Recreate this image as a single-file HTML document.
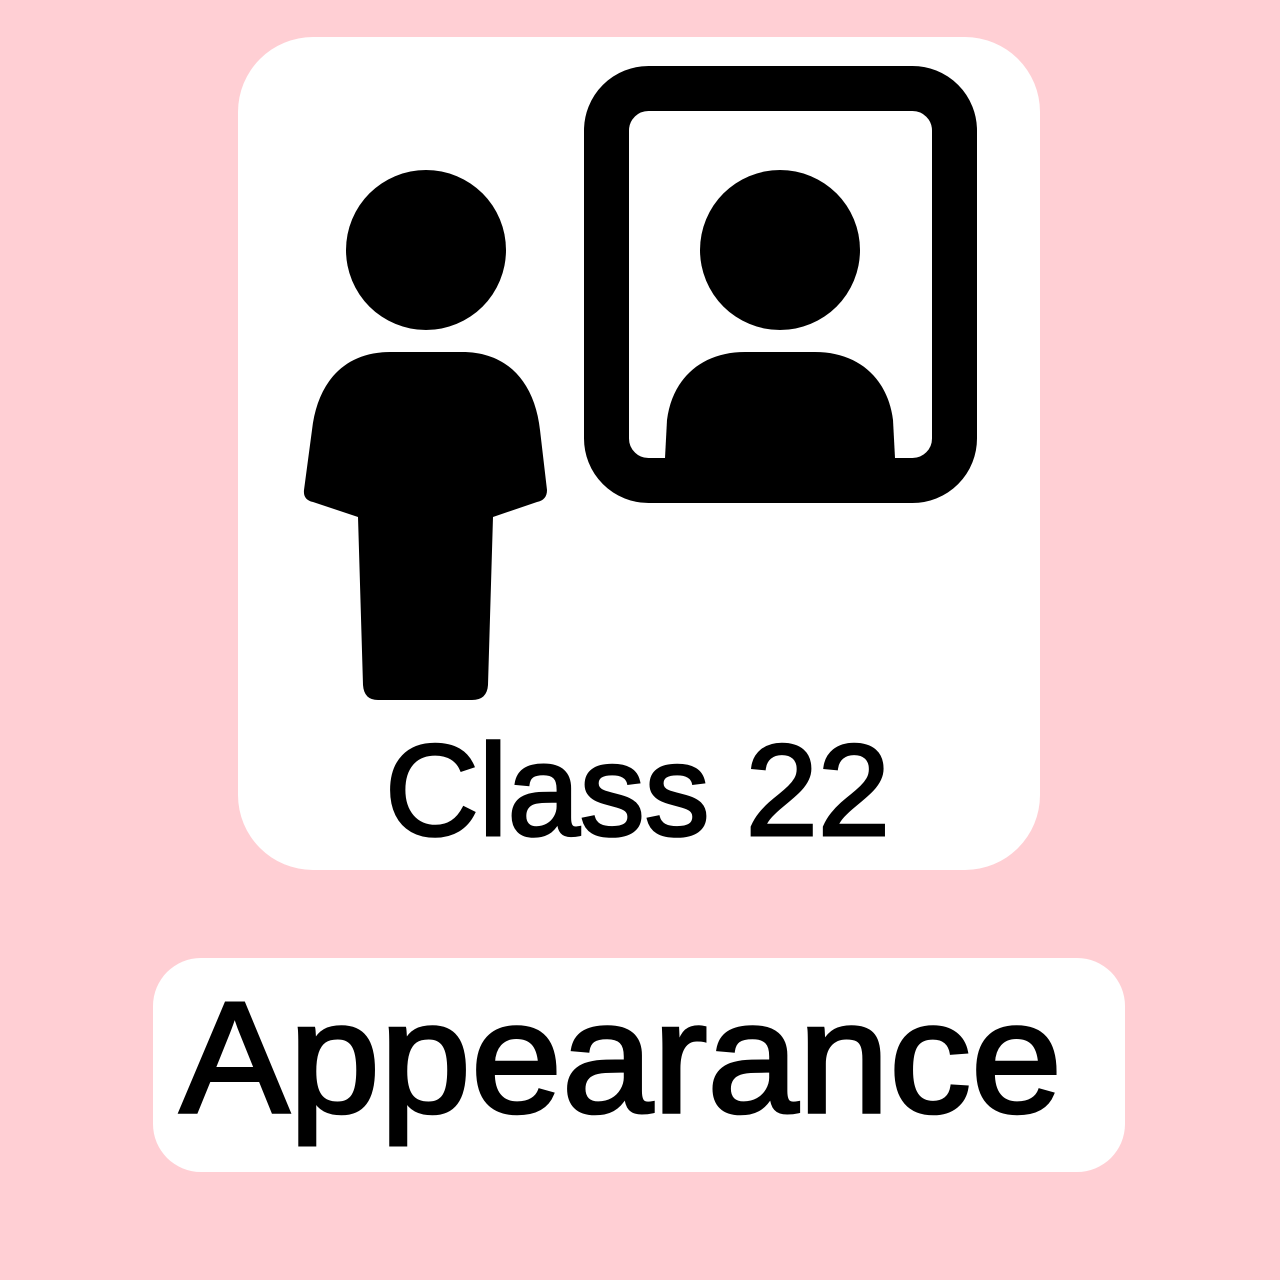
<!DOCTYPE html>
<html><head><meta charset="utf-8"><style>
html,body{margin:0;padding:0;background:#ffcfd4;width:1280px;height:1280px;overflow:hidden}
svg{display:block}
</style></head><body>
<svg width="1280" height="1280" viewBox="0 0 1280 1280" xmlns="http://www.w3.org/2000/svg">
<rect width="1280" height="1280" fill="#ffcfd4"/>
<rect x="238" y="37" width="802" height="833" rx="75" fill="#fff"/>
<rect x="153" y="958" width="972" height="214" rx="48" fill="#fff"/>
<circle cx="426" cy="250" r="80" fill="#000"/>
<path d="M390 352 H462 C510 352 535 385 540 430 L547 490 Q547 500 537 502 L493 517 L488 685 Q487 700 472 700 H378 Q364 700 363 685 L358 517 L313 502 Q303 500 304 490 L312 430 C317 385 342 352 390 352 Z" fill="#000"/>
<rect x="606.5" y="88.5" width="348" height="392" rx="42" fill="none" stroke="#000" stroke-width="45"/>
<circle cx="780" cy="250" r="80" fill="#000"/>
<path d="M665 458 L667 420 C672 380 700 352 745 352 H815 C860 352 888 380 893 420 L895 458 Z" fill="#000"/>
<text x="385" y="835" font-family="Liberation Sans, sans-serif" font-size="130" fill="#000" stroke="#000" stroke-width="3" textLength="505" lengthAdjust="spacingAndGlyphs">Class 22</text>
<text x="180" y="1112" font-family="Liberation Sans, sans-serif" font-size="158" fill="#000" stroke="#000" stroke-width="3.5" textLength="882" lengthAdjust="spacingAndGlyphs">Appearance</text>
</svg>
</body></html>
